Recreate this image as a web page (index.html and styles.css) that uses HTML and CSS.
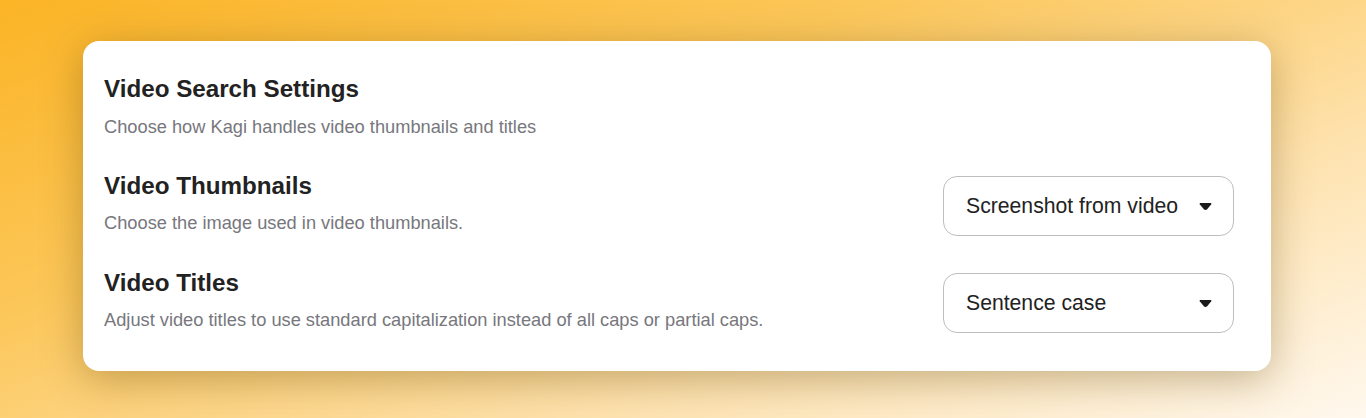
FILE: index.html
```html
<!DOCTYPE html>
<html lang="en">
<head>
<meta charset="utf-8">
<title>Video Search Settings</title>
<link rel="stylesheet" href="styles.css">
</head>
<body>
<div class="card">
  <div class="header">
    <h1 class="title">Video Search Settings</h1>
    <p class="desc">Choose how Kagi handles video thumbnails and titles</p>
  </div>
  <div class="row">
    <div class="text">
      <h2 class="subtitle">Video Thumbnails</h2>
      <p class="desc">Choose the image used in video thumbnails.</p>
    </div>
    <div class="select">
      <span class="value">Screenshot from video</span>
      <svg class="caret" width="13" height="9" viewBox="0 0 13 9"><path d="M1.4 1 H11.6 Q12.8 1 12.2 2.2 L8.2 7.2 Q6.5 8.8 4.8 7.2 L0.8 2.2 Q0.2 1 1.4 1 Z" fill="#1a1a1a"/></svg>
    </div>
  </div>
  <div class="row">
    <div class="text">
      <h2 class="subtitle">Video Titles</h2>
      <p class="desc">Adjust video titles to use standard capitalization instead of all caps or partial caps.</p>
    </div>
    <div class="select">
      <span class="value">Sentence case</span>
      <svg class="caret" width="13" height="9" viewBox="0 0 13 9"><path d="M1.4 1 H11.6 Q12.8 1 12.2 2.2 L8.2 7.2 Q6.5 8.8 4.8 7.2 L0.8 2.2 Q0.2 1 1.4 1 Z" fill="#1a1a1a"/></svg>
    </div>
  </div>
</div>
</body>
</html>
```

FILE: styles.css
```css
html, body {
  margin: 0;
  height: 100%;
}
body {
  width: 1366px;
  height: 418px;
  overflow: hidden;
  box-sizing: border-box;
  padding: 41px 0 0 83px;
  font-family: "Liberation Sans", Arial, sans-serif;
  background: linear-gradient(160deg, #fbb425 0%, #fcc75a 35%, #fee3b0 70%, #fff8ee 100%);
}
.card {
  width: 1188px;
  height: 330px;
  box-sizing: border-box;
  background: #fff;
  border-radius: 16px;
  padding: 35px 37px 0 21px;
  box-shadow: 0 8px 40px rgba(90, 60, 0, 0.35);
}
.header {
  margin-bottom: 39px;
}
.title, .subtitle {
  margin: 0;
  font-size: 24.2px;
  line-height: 26px;
  font-weight: 700;
  color: #222;
}
.desc {
  margin: 0;
  font-size: 18.25px;
  line-height: 20px;
  color: #77777d;
}
.header .desc {
  margin-top: 15px;
}
.row {
  display: flex;
  align-items: center;
  justify-content: space-between;
  height: 60px;
  margin-bottom: 37px;
}
.text {
  padding-bottom: 6px;
}
.text .desc {
  margin-top: 14px;
}
.select {
  width: 291px;
  height: 60px;
  box-sizing: border-box;
  border: 1px solid #bdbdc2;
  border-radius: 14px;
  display: flex;
  align-items: center;
  justify-content: space-between;
  padding: 0 21px 0 22px;
}
.value {
  font-size: 21.2px;
  color: #222;
}
.caret {
  display: block;
}
```
